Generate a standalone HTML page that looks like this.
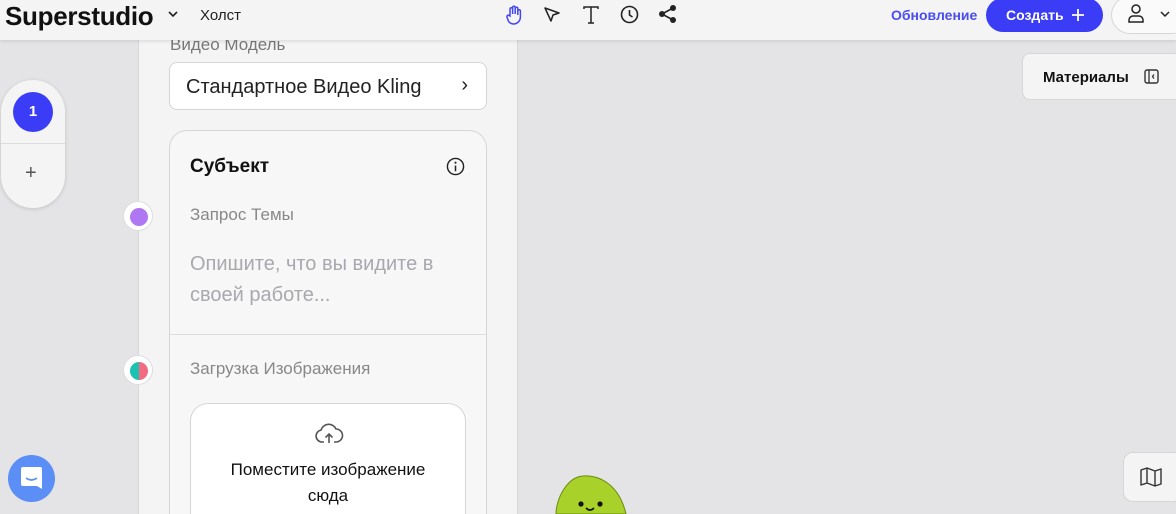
<!DOCTYPE html>
<html><head><meta charset="utf-8"><style>
*{box-sizing:border-box;margin:0;padding:0}
html{width:1176px;height:514px;overflow:hidden}
body{width:1176px;height:514px;overflow:hidden;background:#e4e4e6;font-family:"Liberation Sans",sans-serif;position:relative;color:#111}
.top{position:absolute;left:0;top:0;width:1176px;height:40px;background:#f4f4f5;box-shadow:0 1px 4px rgba(0,0,0,.12);z-index:5}
.abs{position:absolute}
.panel{position:absolute;left:138px;top:0;width:380px;height:514px;background:#f4f4f5;border-left:1px solid #d8d8da;border-right:1px solid #d8d8da}
.card{position:absolute;background:#f7f7f8;border:1px solid #d6d6d8;border-bottom:none;border-radius:18px 18px 0 0}
.dot{position:absolute;width:30px;height:30px;border-radius:50%;background:#fff;border:1px solid #ddd}
.dot i{position:absolute;left:6px;top:6px;width:18px;height:18px;border-radius:50%}
</style></head><body>
<div class="panel"></div>
<div class="abs" style="left:170px;top:35px;font-size:17px;color:#777">Видео Модель</div>
<div class="abs" style="left:169px;top:62px;width:318px;height:48px;background:#fff;border:1px solid #d6d6d8;border-radius:8px;font-size:20px;padding:13px 0 0 16px;color:#222">Стандартное Видео Kling<span style="position:absolute;right:18px;top:11px">›</span></div>
<div class="card" style="left:169px;top:130px;width:318px;height:384px"></div>
<div class="abs" style="left:170px;top:334px;width:316px;height:1px;background:#ddd"></div>
<div class="abs" style="left:190px;top:156px;font-size:19px;font-weight:bold">Субъект</div>
<svg class="abs" style="left:446px;top:157px" width="19" height="19" viewBox="0 0 20 20"><circle cx="10" cy="10" r="8.5" fill="none" stroke="#222" stroke-width="1.5"/><circle cx="10" cy="6" r="1.1" fill="#222"/><path d="M10 9v6" stroke="#222" stroke-width="1.6"/></svg>
<div class="abs" style="left:190px;top:205px;font-size:17px;color:#888">Запрос Темы</div>
<div class="abs" style="left:190px;top:249px;font-size:20px;line-height:31px;color:#a8a8ad">Опишите, что вы видите в<br>своей работе...</div>
<div class="abs" style="left:190px;top:359px;font-size:17px;color:#888">Загрузка Изображения</div>
<div class="abs" style="left:190px;top:403px;width:276px;height:130px;background:#fff;border:1px solid #d6d6d8;border-radius:18px;text-align:center;font-size:17px;line-height:26px;padding-top:53px;color:#111">Поместите изображение<br>сюда</div>
<svg class="abs" style="left:314px;top:422px" width="30" height="24" viewBox="0 0 30 24"><path d="M10 20H8a6 6 0 0 1-1-11.9A8 8 0 0 1 22 7a6 6 0 0 1 0 13h-2" fill="none" stroke="#555" stroke-width="1.6"/><path d="M15 21v-9M11.5 15.5 15 12l3.5 3.5" fill="none" stroke="#555" stroke-width="1.6"/></svg>
<div class="dot" style="left:123px;top:201px"><i style="background:#b077f2"></i></div>
<div class="dot" style="left:123px;top:355px"><i style="background:linear-gradient(90deg,#1cc1b0 50%,#f36b80 50%)"></i></div>
<div class="abs" style="left:1px;top:80px;width:64px;height:128px;background:#f4f4f5;border-radius:32px;box-shadow:0 1px 4px rgba(0,0,0,.15)"></div>
<div class="abs" style="left:1px;top:143px;width:64px;height:1px;background:#ddd"></div>
<div class="abs" style="left:13px;top:92px;width:40px;height:40px;border-radius:50%;background:#3a3df5;color:#fff;font-size:15px;font-weight:bold;text-align:center;line-height:40px">1</div>
<div class="abs" style="left:25px;top:162px;font-size:20px;color:#555">+</div>
<div class="abs" style="left:8px;top:455px;width:47px;height:47px;border-radius:50%;background:#5b8ff5"></div>
<svg class="abs" style="left:20px;top:466px" width="23" height="24" viewBox="0 0 23 24"><path d="M3 1h17a2 2 0 0 1 2 2v20l-5-3H3a2 2 0 0 1-2-2V3a2 2 0 0 1 2-2z" fill="#fff"/><path d="M6 12q5.5 4 11 0" stroke="#5b8ff5" stroke-width="1.6" fill="none"/></svg>
<div class="abs" style="left:1022px;top:53px;width:160px;height:47px;background:#f4f4f5;border:1px solid #d6d6d8;border-radius:8px;font-size:15px;font-weight:bold;padding:15px 0 0 20px">Материалы</div>
<svg class="abs" style="left:1144px;top:69px" width="15" height="15" viewBox="0 0 15 15"><rect x="1" y="1" width="13" height="13" rx="2" fill="none" stroke="#333" stroke-width="1.4"/><path d="M5 1v13M10 5.5 8.5 7.5 10 9.5" fill="none" stroke="#333" stroke-width="1.3"/></svg>
<div class="abs" style="left:1123px;top:452px;width:60px;height:50px;background:#f4f4f5;border:1px solid #d6d6d8;border-radius:10px"></div>
<svg class="abs" style="left:1140px;top:467px" width="22" height="20" viewBox="0 0 22 20"><path d="M1 3l6-2 8 3 6-2v15l-6 2-8-3-6 2z M7 1v15 M15 4v15" fill="none" stroke="#333" stroke-width="1.4" stroke-linejoin="round"/></svg>
<svg class="abs" style="left:553px;top:474px" width="76" height="40" viewBox="0 0 76 40"><path d="M3 40C3 25 14 3 30 2S66 10 73 40z" fill="#a8d12a" stroke="#6a8a10" stroke-width="1"/><circle cx="28" cy="30" r="2.6" fill="#111"/><circle cx="47" cy="30" r="2.6" fill="#111"/><path d="M33 34q4 4 8 0" stroke="#111" stroke-width="1.6" fill="none"/></svg>
<div class="top">
<div class="abs" style="left:5px;top:1px;font-size:26px;font-weight:bold;letter-spacing:-0.3px">Superstudio</div>
<svg class="abs" style="left:167px;top:10px" width="12" height="9" viewBox="0 0 12 9"><path d="M2 2l4 4 4-4" fill="none" stroke="#222" stroke-width="1.6"/></svg>
<div class="abs" style="left:200px;top:7px;font-size:15px;color:#222">Холст</div>
<svg class="abs" style="left:505px;top:5px" width="18" height="20" viewBox="0 0 18 20"><path d="M5 11V4a1.3 1.3 0 0 1 2.6 0v5V2.5a1.3 1.3 0 0 1 2.6 0V9V3.5a1.3 1.3 0 0 1 2.6 0V10V6a1.3 1.3 0 0 1 2.6 0v6a7 7 0 0 1-7 7 6 6 0 0 1-5-3L2 12a1.3 1.3 0 0 1 2-1.5z" fill="none" stroke="#4246f0" stroke-width="1.5"/></svg>
<svg class="abs" style="left:543px;top:6px" width="18" height="18" viewBox="0 0 18 18"><path d="M2 2l14 5-6 2-2 6z" fill="none" stroke="#222" stroke-width="1.5" stroke-linejoin="round"/></svg>
<svg class="abs" style="left:582px;top:5px" width="18" height="19" viewBox="0 0 18 19"><path d="M2 4V2h14v2M9 2v16M6 18h6" fill="none" stroke="#222" stroke-width="1.5"/></svg>
<svg class="abs" style="left:620px;top:5px" width="19" height="19" viewBox="0 0 19 19"><circle cx="9.5" cy="9.5" r="8" fill="none" stroke="#222" stroke-width="1.6"/><path d="M9.5 5v5l3 2" fill="none" stroke="#222" stroke-width="1.6"/></svg>
<svg class="abs" style="left:658px;top:4px" width="20" height="20" viewBox="0 0 20 20"><circle cx="15" cy="4" r="3" fill="#222"/><circle cx="4" cy="10" r="3" fill="#222"/><circle cx="15" cy="16" r="3" fill="#222"/><path d="M15 4 4 10l11 6" fill="none" stroke="#222" stroke-width="1.6"/></svg>
<div class="abs" style="left:891px;top:7px;font-size:14px;font-weight:bold;color:#4a4df0">Обновление</div>
<div class="abs" style="left:986px;top:-2px;width:117px;height:34px;border-radius:17px;background:#3a3df5;color:#fff;font-size:14px;font-weight:bold;padding:9px 0 0 20px">Создать</div>
<svg class="abs" style="left:1071px;top:8px" width="14" height="14" viewBox="0 0 14 14"><path d="M7 1v12M1 7h12" stroke="#fff" stroke-width="1.8"/></svg>
<div class="abs" style="left:1111px;top:-4px;width:80px;height:38px;border-radius:19px;background:#fafafa;border:1px solid #d6d6d8"></div>
<svg class="abs" style="left:1127px;top:3px" width="18" height="20" viewBox="0 0 18 20"><circle cx="9" cy="6" r="4" fill="none" stroke="#222" stroke-width="1.5"/><path d="M2 19v-2a4 4 0 0 1 4-4h6a4 4 0 0 1 4 4v2z" fill="none" stroke="#222" stroke-width="1.5"/></svg>
<svg class="abs" style="left:1160px;top:11px" width="10" height="7" viewBox="0 0 10 7"><path d="M1 1l4 4 4-4" fill="none" stroke="#222" stroke-width="1.5"/></svg>
</div>
</body></html>
